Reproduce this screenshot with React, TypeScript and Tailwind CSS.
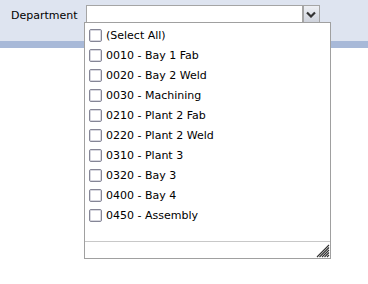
import React from "react";

const items = [
  "(Select All)",
  "0010 - Bay 1 Fab",
  "0020 - Bay 2 Weld",
  "0030 - Machining",
  "0210 - Plant 2 Fab",
  "0220 - Plant 2 Weld",
  "0310 - Plant 3",
  "0320 - Bay 3",
  "0400 - Bay 4",
  "0450 - Assembly",
];

export default function App() {
  return (
    <div className="relative w-[368px] h-[284px] bg-white font-['DejaVu_Sans',Verdana,sans-serif] text-[11px] text-black">
      <div className="h-[41px] bg-[#dee4f0] flex items-start">
        <div className="pl-[11px] pt-[9px] leading-[13px]">Department</div>
        <div className="ml-[8px] mt-[5px] w-[217px] h-[18px] bg-white border border-[#a5a5a5]" />
        <div className="mt-[5px] w-[17px] h-[18px] border border-[#a5a5a5] bg-gradient-to-b from-[#eef0f4] to-[#cfd3dc] flex items-center justify-center">
          <svg width="10" height="7" viewBox="0 0 10 7">
            <path d="M1 1.5 L5 5.5 L9 1.5" stroke="#333" strokeWidth="2.2" fill="none" />
          </svg>
        </div>
      </div>
      <div className="h-[7px] bg-[#a8b9d8]" />
      <div className="absolute left-[84px] top-[22px] w-[247px] h-[237px] bg-white border border-[#a0a0a0] flex flex-col">
        <div className="flex-1 pt-[2px]">
          {items.map((t) => (
            <div key={t} className="h-[20px] flex items-center pl-[4px]">
              <div className="w-[13px] h-[13px] rounded-[2px] border border-[#858696] bg-white shadow-[inset_0_0_0_1px_#d8d8e0]" />
              <span className="ml-[4px] leading-[13px]">{t}</span>
            </div>
          ))}
        </div>
        <div className="h-[17px] border-t border-[#c8c8c8] flex justify-end items-end">
          <svg width="14" height="14" viewBox="0 0 14 14">
            <path d="M13 1 L1 13 M13 3.5 L3.5 13 M13 6 L6 13 M13 8.5 L8.5 13 M13 11 L11 13" stroke="#333" strokeWidth="1.1" fill="none" />
          </svg>
        </div>
      </div>
    </div>
  );
}
